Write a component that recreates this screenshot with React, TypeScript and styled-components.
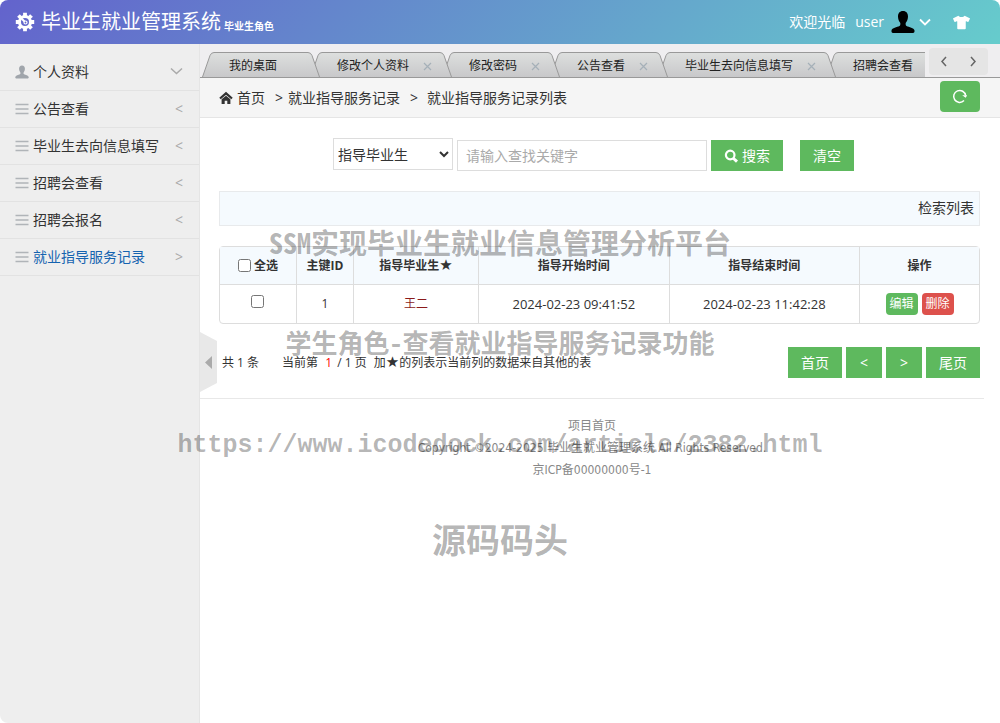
import React from 'react';
import styled, { createGlobalStyle, css } from 'styled-components';
import { FaTshirt } from 'react-icons/fa';

const GlobalStyle = createGlobalStyle`
  * { box-sizing: border-box; }
  body {
    margin: 0;
    background: #fff;
    color: #333;
    font: 14px/20px "Open Sans", "Noto Sans CJK SC", sans-serif;
  }
  button, input, select { font: inherit; }
  a { color: inherit; text-decoration: none; }
`;

const Shell = styled.div`
  position: relative;
  display: flex;
  flex-direction: column;
  min-height: 100vh;
  overflow: hidden;
  border-radius: 8px;
`;

const Header = styled.header`
  display: flex;
  align-items: center;
  height: 44px;
  padding: 0 30px 0 15px;
  color: #fff;
  background: linear-gradient(135deg, #6363cc, #66cccc);
`;

const Brand = styled.a`
  display: flex;
  align-items: center;
  gap: 6px;
  flex: 1;
  font-size: 20px;
`;

const Role = styled.small`
  font-size: 10px;
  font-weight: 700;
  line-height: 12px;
  padding-top: 8px;
  margin-left: -3px;
`;

const UserArea = styled.div`
  display: flex;
  align-items: center;
`;

const UserName = styled.span`
  margin: 0 7px 0 10px;
`;

const PlainButton = styled.button`
  display: flex;
  align-items: center;
  justify-content: center;
  gap: 4px;
  padding: 0;
  border: 0;
  background: none;
  color: inherit;
  cursor: pointer;
`;

const SkinButton = styled(PlainButton)`
  margin-left: 22px;
`;

const Body = styled.div`
  display: flex;
  flex: 1;
`;

const Sidebar = styled.nav`
  flex: none;
  width: 200px;
  padding-top: 10px;
  background: #eee;
  border-right: 1px solid #e5e5e5;
`;

const MenuItem = styled.a<{ $active?: boolean }>`
  display: flex;
  align-items: center;
  gap: 4px;
  height: 37px;
  padding: 0 16px 0 15px;
  border-bottom: 1px solid #e2e2e2;
  color: ${(p) => (p.$active ? '#1563b0' : '#333')};
`;

const MenuText = styled.span`
  flex: 1;
`;

const MenuArrow = styled.span`
  color: #aaa;
`;

const Collapse = styled(PlainButton)`
  position: absolute;
  top: 50%;
  left: 200px;
  width: 17px;
  height: 60px;
  transform: translateY(-50%);
`;

const Main = styled.main`
  flex: 1;
  min-width: 0;
`;

const TabBar = styled.div`
  display: flex;
  align-items: flex-end;
  height: 34px;
  padding: 0 12px 0 2px;
  background: #efeef0;
  border-bottom: 1px solid #999;
`;

const TabStrip = styled.div`
  display: flex;
  flex: 1;
  min-width: 0;
  overflow: hidden;
`;

const Tab = styled.div<{ $order: number }>`
  position: relative;
  z-index: ${(p) => p.$order};
  display: flex;
  flex: none;
  height: 25px;
  margin-right: -10px;
  font-size: 12px;
`;

const TabFace = styled.div<{ $closable: boolean }>`
  display: flex;
  align-items: center;
  gap: 13px;
  padding: 2px ${(p) => (p.$closable ? 6 : 30)}px 0 14px;
  margin: 0 -1px;
  color: #222;
  border-top: 1px solid #999;
  background: linear-gradient(#dddfde, #c8c8ca);
`;

const TabClose = styled(PlainButton)`
  width: 11px;
  color: #a5b0b8;
`;

const TabNav = styled.div`
  display: flex;
  justify-content: space-around;
  width: 59px;
  height: 27px;
  margin: 0 0 2px 4px;
  border-radius: 4px;
  background: #e5e5e5;
  color: #666;
`;

const Crumbs = styled.div`
  display: flex;
  align-items: center;
  height: 40px;
  padding: 0 20px 0 19px;
  background: #f5f5f5;
  border-bottom: 1px solid #e5e5e5;
`;

const CrumbPath = styled.div`
  display: flex;
  align-items: center;
  flex: 1;
`;

const CrumbHome = styled.a`
  display: flex;
  align-items: center;
  gap: 4px;
`;

const CrumbSep = styled.span<{ $tight?: boolean }>`
  margin: 0 ${(p) => (p.$tight ? 5 : 9)}px 0 10px;
`;

const green = css`
  border: 0;
  color: #fff;
  background: #5eb95e;
  cursor: pointer;
`;

const RefreshButton = styled.button`
  ${green}
  display: flex;
  align-items: center;
  justify-content: center;
  width: 40px;
  height: 31px;
  margin-bottom: 3px;
  border-radius: 4px;
`;

const Button = styled.button`
  ${green}
  display: inline-flex;
  align-items: center;
  gap: 4px;
  height: 31px;
  padding: 0 13px;
`;

const ArrowButton = styled(Button)`
  justify-content: center;
  width: 36px;
`;

const Content = styled.div`
  padding: 20px 20px 0 19px;
`;

const SearchForm = styled.form`
  display: flex;
  justify-content: center;
  align-items: flex-end;
  gap: 4px;
  padding-right: 12px;
  margin-bottom: 20px;
`;

const Select = styled.select`
  width: 120px;
  height: 32px;
  margin-bottom: 1px;
  padding: 0;
  border: 1px solid #ddd;
  background: #fff;
  color: #333;
`;

const TextInput = styled.input`
  width: 250px;
  height: 31px;
  padding: 0 8px;
  border: 1px solid #ddd;
  &::placeholder { color: #aaa; }
`;

const ClearButton = styled(Button)`
  margin-left: 13px;
`;

const ListBar = styled.div`
  padding: 6px 5px 7px;
  margin-bottom: 20px;
  border: 1px solid #e8eaec;
  background: #f5fafe;
  text-align: right;
`;

const Table = styled.table`
  width: 100%;
  table-layout: fixed;
  border-collapse: separate;
  border-spacing: 0;
  border: 1px solid #ddd;
  border-radius: 4px;
  font-size: 12px;
  text-align: center;
  th, td { padding: 0; border-left: 1px solid #ddd; }
  th:first-child, td:first-child { border-left: 0; }
  th { height: 37px; background: #f5fafe; }
  td { height: 39px; border-top: 1px solid #ddd; }
`;

const Col = styled.col<{ $w: number }>`
  width: ${(p) => p.$w}%;
`;

const CheckAll = styled.label`
  display: flex;
  align-items: center;
  justify-content: center;
  gap: 3px;
`;

const Checkbox = styled.input`
  width: 13px;
  height: 13px;
  margin: 0;
`;

const DateText = styled.span`
  font-size: 13px;
`;

const Linked = styled.span`
  color: #8b1a1a;
`;

const Star = styled.span`
  font: 400 15px/12px "DejaVu Sans", sans-serif;
`;

const RowButton = styled.button<{ $danger?: boolean }>`
  height: 22px;
  padding: 0 4px;
  margin: 0 2px;
  border: 0;
  border-radius: 4px;
  color: #fff;
  background: ${(p) => (p.$danger ? '#dd514c' : '#5eb95e')};
`;

const Pager = styled.div`
  display: flex;
  align-items: center;
  justify-content: space-between;
  padding: 23px 0 20px 3px;
  font-size: 12px;
`;

const PagerInfo = styled.div`
  display: flex;
  gap: 7px;
`;

const Total = styled.span`
  margin-right: 16px;
`;

const Current = styled.span`
  margin: 0 2px 0 4px;
  color: #f00;
`;

const PagerButtons = styled.div`
  display: flex;
  gap: 4px;
  font-size: 14px;
`;

const Footer = styled.footer`
  display: flex;
  flex-direction: column;
  align-items: center;
  margin-right: 16px;
  padding-top: 16px;
  border-top: 1px solid #e8e8e8;
  color: #888;
  font: 12px/22px "DejaVu Sans Condensed", "Noto Sans CJK SC", sans-serif;
`;

const Watermark = styled.div`
  position: absolute;
  inset: 0;
  z-index: 20;
  display: flex;
  flex-direction: column;
  align-items: center;
  padding-top: 192px;
  pointer-events: none;
  color: rgba(0, 0, 0, 0.3);
`;

const WatermarkLine = styled.div<{ $size: number; $height?: number; $mono?: boolean }>`
  font: 700 ${(p) => p.$size}px/${(p) => p.$height ?? 100}px
    ${(p) => (p.$mono ? '"Liberation Mono", monospace' : '"Noto Sans CJK SC", sans-serif')};
  font-feature-settings: "hwid";
  white-space: nowrap;
`;

const PERSON =
  'M12 1c-3.400 0-5 2.400-5 5.600 0 2.500.900 4.700 2.200 6.100.400 1.300.200 2.600-.7 3.200C6 17.200 1 17.600.500 20.500c-.2 1.500.3 2.500 1.500 2.500h20c1.200 0 1.700-1 1.500-2.500-.5-2.900-5.500-3.300-8-4.600-.9-.6-1.100-1.900-.7-3.200C16.100 11.300 17 9.100 17 6.600 17 3.400 15.400 1 12 1z';

const Person = ({ size, color }: { size: number; color: string }) => (
  <svg width={size} height={size} viewBox="0 0 24 24" fill={color} aria-hidden="true">
    <path d={PERSON} />
  </svg>
);

const Gear = () => (
  <svg width="20" height="20" viewBox="0 0 20 20" fill="none" stroke="#fff" aria-hidden="true">
    <circle cx="10" cy="10" r="5.500" strokeWidth="3" />
    {[0, 45, 90, 135, 180, 225, 270, 315].map((a) => (
      <path key={a} d="M10 4V0.800" strokeWidth="3.800" transform={`rotate(${a} 10 10)`} />
    ))}
    <path d="M6 6l3.500 3.500" strokeWidth="2" />
    <circle cx="10.500" cy="10.500" r="1.500" strokeWidth="1.200" />
  </svg>
);

const Lines = () => (
  <svg width="14" height="14" viewBox="0 0 14 14" stroke="#b0b4b8" strokeWidth="1.700" aria-hidden="true">
    <path d="M0.500 2.500h13M0.500 7h13M0.500 11.500h13" />
  </svg>
);

const Chevron = ({ d, w = 12, h = 12, width = 1.5 }: { d: string; w?: number; h?: number; width?: number }) => (
  <svg width={w} height={h} viewBox={`0 0 ${w} ${h}`} fill="none" stroke="currentColor" strokeWidth={width} aria-hidden="true">
    <path d={d} />
  </svg>
);

const Edge = ({ flip }: { flip?: boolean }) => (
  <svg width="14" height="25" viewBox="0 0 14 25" aria-hidden="true">
    <defs>
      <linearGradient id="edge" x1="0" y1="0" x2="0" y2="1">
        <stop offset="0" stopColor="#dddfde" />
        <stop offset="1" stopColor="#c8c8ca" />
      </linearGradient>
    </defs>
    <g transform={flip ? 'translate(14 0) scale(-1 1)' : undefined}>
      <path d="M0.500 25L8 3.500Q9.200 0.500 12 0.500H14V25z" fill="url(#edge)" />
      <path d="M0.500 25L8 3.500Q9.200 0.500 12 0.500H14" fill="none" stroke="#999" />
    </g>
  </svg>
);

const HomeIcon = () => (
  <svg width="14" height="14" viewBox="0 0 14 14" aria-hidden="true">
    <path d="M1 7.500L7 2.300l6 5.200" fill="none" stroke="#333" strokeWidth="2.200" />
    <path d="M2.600 8.300L7 4.800l4.400 3.500V13H8.300V9.800H5.700V13H2.600z" fill="#333" />
  </svg>
);

const RefreshIcon = () => (
  <svg width="16" height="16" viewBox="0 0 16 16" fill="none" aria-hidden="true">
    <path d="M12 12.600A6 6 0 1 1 13.600 7.500" stroke="#fff" strokeWidth="1.500" />
    <path d="M10.200 7.200h5l-1.500 2.600z" fill="#fff" />
  </svg>
);

const SearchIcon = () => (
  <svg width="14" height="14" viewBox="0 0 14 14" fill="none" stroke="#fff" aria-hidden="true">
    <circle cx="6.200" cy="6" r="4.300" strokeWidth="2.200" />
    <path d="M9 9l4 3.600" strokeWidth="3" />
  </svg>
);

const menu = ['公告查看', '毕业生去向信息填写', '招聘会查看', '招聘会报名', '就业指导服务记录'];
const tabs = ['我的桌面', '修改个人资料', '修改密码', '公告查看', '毕业生去向信息填写', '招聘会查看'];

export default function App() {
  return (
    <Shell>
      <GlobalStyle />
      <Header>
        <Brand href="#">
          <Gear />
          <span>毕业生就业管理系统</span>
          <Role>毕业生角色</Role>
        </Brand>
        <UserArea>
          <span>欢迎光临</span>
          <UserName>user</UserName>
          <PlainButton aria-label="用户菜单">
            <Person size={24} color="#000" />
            <Chevron d="M1 3.500l5 5 5-5" width={1.8} />
          </PlainButton>
          <SkinButton aria-label="换肤">
            <FaTshirt size={17} />
          </SkinButton>
        </UserArea>
      </Header>
      <Body>
        <Sidebar>
          <MenuItem href="#">
            <Person size={14} color="#a0a5ab" />
            <MenuText>个人资料</MenuText>
            <MenuArrow>
              <Chevron d="M1 3.500l5.500 5 5.500-5" w={13} />
            </MenuArrow>
          </MenuItem>
          {menu.map((m, i) => (
            <MenuItem href="#" key={m} $active={i === 4}>
              <Lines />
              <MenuText>{m}</MenuText>
              <MenuArrow>{i === 4 ? '>' : '<'}</MenuArrow>
            </MenuItem>
          ))}
        </Sidebar>
        <Main>
          <TabBar>
            <TabStrip>
              {tabs.map((t, i) => (
                <Tab key={t} $order={10 - i}>
                  <Edge />
                  <TabFace $closable={i > 0}>
                    {t}
                    {i > 0 && (
                      <TabClose aria-label="关闭">
                        <Chevron d="M2 2l7 7M9 2l-7 7" w={11} h={11} width={1.2} />
                      </TabClose>
                    )}
                  </TabFace>
                  <Edge flip />
                </Tab>
              ))}
            </TabStrip>
            <TabNav>
              <PlainButton aria-label="向左">
                <Chevron d="M8 2L4 6.500 8 11" h={13} />
              </PlainButton>
              <PlainButton aria-label="向右">
                <Chevron d="M4 2l4 4.500L4 11" h={13} />
              </PlainButton>
            </TabNav>
          </TabBar>
          <Crumbs>
            <CrumbPath>
              <CrumbHome href="#">
                <HomeIcon />
                首页
              </CrumbHome>
              <CrumbSep $tight>&gt;</CrumbSep>
              <span>就业指导服务记录</span>
              <CrumbSep>&gt;</CrumbSep>
              <span>就业指导服务记录列表</span>
            </CrumbPath>
            <RefreshButton aria-label="刷新">
              <RefreshIcon />
            </RefreshButton>
          </Crumbs>
          <Content>
            <SearchForm onSubmit={(e) => e.preventDefault()}>
              <Select aria-label="查找字段">
                <option>指导毕业生</option>
              </Select>
              <TextInput type="text" aria-label="关键字" placeholder="请输入查找关键字" />
              <Button type="submit">
                <SearchIcon />
                搜索
              </Button>
              <ClearButton type="reset">清空</ClearButton>
            </SearchForm>
            <ListBar>检索列表</ListBar>
            <Table>
              <colgroup>
                <Col $w={10} />
                <Col $w={7.5} />
                <Col $w={16.5} />
                <Col $w={25.1} />
                <Col $w={25.1} />
                <Col $w={15.8} />
              </colgroup>
              <thead>
                <tr>
                  <th>
                    <CheckAll>
                      <Checkbox type="checkbox" />
                      全选
                    </CheckAll>
                  </th>
                  <th>主键ID</th>
                  <th>
                    指导毕业生<Star>★</Star>
                  </th>
                  <th>指导开始时间</th>
                  <th>指导结束时间</th>
                  <th>操作</th>
                </tr>
              </thead>
              <tbody>
                <tr>
                  <td>
                    <Checkbox type="checkbox" aria-label="选择第1行" />
                  </td>
                  <td>1</td>
                  <td>
                    <Linked>王二</Linked>
                  </td>
                  <td>
                    <DateText>2024-02-23 09:41:52</DateText>
                  </td>
                  <td>
                    <DateText>2024-02-23 11:42:28</DateText>
                  </td>
                  <td>
                    <RowButton>编辑</RowButton>
                    <RowButton $danger>删除</RowButton>
                  </td>
                </tr>
              </tbody>
            </Table>
            <Pager>
              <PagerInfo>
                <Total>共 1 条</Total>
                <span>
                  当前第 <Current>1</Current> / 1 页
                </span>
                <span>
                  加<Star>★</Star>的列表示当前列的数据来自其他的表
                </span>
              </PagerInfo>
              <PagerButtons>
                <Button>首页</Button>
                <ArrowButton>&lt;</ArrowButton>
                <ArrowButton>&gt;</ArrowButton>
                <Button>尾页</Button>
              </PagerButtons>
            </Pager>
          </Content>
          <Footer>
            <a href="#">项目首页</a>
            <span>Copyright ©2024-2025 毕业生就业管理系统 All Rights Reserved.</span>
            <span>京ICP备00000000号-1</span>
          </Footer>
        </Main>
      </Body>
      <Collapse aria-label="收起菜单">
        <svg width="17" height="60" viewBox="0 0 17 60" aria-hidden="true">
          <path d="M0 0l17 9v42L0 60z" fill="#e8e8e8" />
          <path d="M12 24v13l-7-6.500z" fill="#aaa" />
        </svg>
      </Collapse>
      <Watermark>
        <WatermarkLine $size={28}>SSM实现毕业生就业信息管理分析平台</WatermarkLine>
        <WatermarkLine $size={26}>学生角色-查看就业指导服务记录功能</WatermarkLine>
        <WatermarkLine $size={25} $height={108} $mono>https://www.icodedock.com/article/2382.html</WatermarkLine>
        <WatermarkLine $size={34} $height={78}>源码码头</WatermarkLine>
      </Watermark>
    </Shell>
  );
}
